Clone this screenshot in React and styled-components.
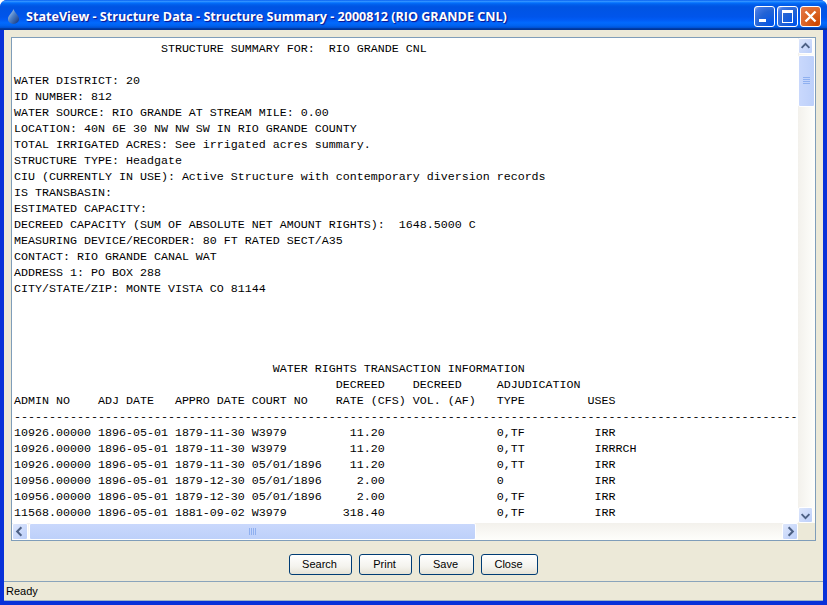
import React from "react";
import styled, { createGlobalStyle } from "styled-components";

const GlobalStyle = createGlobalStyle`
  html, body {
    margin: 0;
    padding: 0;
    background: #ffffff;
  }
`;

const row = (admin, adj, appro, court, rate, type, use) =>
  admin.padEnd(12) +
  adj.padEnd(11) +
  appro.padEnd(11) +
  court.padEnd(12) +
  rate.padStart(7) +
  "".padEnd(16) +
  type.padEnd(14) +
  use;

const report = [
  "                     STRUCTURE SUMMARY FOR:  RIO GRANDE CNL",
  "",
  "WATER DISTRICT: 20",
  "ID NUMBER: 812",
  "WATER SOURCE: RIO GRANDE AT STREAM MILE: 0.00",
  "LOCATION: 40N 6E 30 NW NW SW IN RIO GRANDE COUNTY",
  "TOTAL IRRIGATED ACRES: See irrigated acres summary.",
  "STRUCTURE TYPE: Headgate",
  "CIU (CURRENTLY IN USE): Active Structure with contemporary diversion records",
  "IS TRANSBASIN:",
  "ESTIMATED CAPACITY:",
  "DECREED CAPACITY (SUM OF ABSOLUTE NET AMOUNT RIGHTS):  1648.5000 C",
  "MEASURING DEVICE/RECORDER: 80 FT RATED SECT/A35",
  "CONTACT: RIO GRANDE CANAL WAT",
  "ADDRESS 1: PO BOX 288",
  "CITY/STATE/ZIP: MONTE VISTA CO 81144",
  "",
  "",
  "",
  "",
  "                                     WATER RIGHTS TRANSACTION INFORMATION",
  "                                              DECREED    DECREED     ADJUDICATION",
  "ADMIN NO    ADJ DATE   APPRO DATE COURT NO    RATE (CFS) VOL. (AF)   TYPE         USES",
  "-".repeat(112),
  row("10926.00000", "1896-05-01", "1879-11-30", "W3979", "11.20", "0,TF", "IRR"),
  row("10926.00000", "1896-05-01", "1879-11-30", "W3979", "11.20", "0,TT", "IRRRCH"),
  row("10926.00000", "1896-05-01", "1879-11-30", "05/01/1896", "11.20", "0,TT", "IRR"),
  row("10956.00000", "1896-05-01", "1879-12-30", "05/01/1896", "2.00", "0", "IRR"),
  row("10956.00000", "1896-05-01", "1879-12-30", "05/01/1896", "2.00", "0,TF", "IRR"),
  row("11568.00000", "1896-05-01", "1881-09-02", "W3979", "318.40", "0,TF", "IRR"),
].join("\n");

export default function App() {
  return (
    <>
      <GlobalStyle />
      <Win>
        <TitleBar>
          <Drop />
          <Title>StateView - Structure Data - Structure Summary - 2000812 (RIO GRANDE CNL)</Title>
          <Caption>
            <CapButton>
              <svg width="19" height="19" viewBox="0 0 19 19">
                <rect x="4" y="12" width="7" height="3" fill="#fff" />
              </svg>
            </CapButton>
            <CapButton>
              <svg width="19" height="19" viewBox="0 0 19 19">
                <path d="M4 3h11v13H4z M5 6v9h9V6z" fill="#fff" fillRule="evenodd" />
              </svg>
            </CapButton>
            <CapButton $close>
              <svg width="19" height="19" viewBox="0 0 19 19">
                <path d="M4.500 4.500l10 10M14.500 4.500l-10 10" stroke="#fff" strokeWidth="2.400" />
              </svg>
            </CapButton>
          </Caption>
        </TitleBar>
        <Body>
          <Panel>
            <Report>{report}</Report>
            <VScroll>
              <ScrollButton>
                <Chevron d="M3 9l4.500-4.500L12 9" />
              </ScrollButton>
              <VThumb>
                <Grip width="7" height="8" viewBox="0 0 7 8">
                  <path d="M0 .5h7M0 2.500h7M0 4.500h7M0 6.500h7" stroke="#8fb0f0" />
                </Grip>
              </VThumb>
              <Spacer />
              <ScrollButton>
                <Chevron d="M3 6l4.500 4.500L12 6" />
              </ScrollButton>
            </VScroll>
            <HScroll>
              <ScrollButton>
                <Chevron d="M9 3L4.500 7.500 9 12" />
              </ScrollButton>
              <HThumb>
                <Grip width="8" height="7" viewBox="0 0 8 7">
                  <path d="M.5 0v7M2.500 0v7M4.500 0v7M6.500 0v7" stroke="#8fb0f0" />
                </Grip>
              </HThumb>
              <Spacer />
              <ScrollButton>
                <Chevron d="M6 3l4.500 4.500L6 12" />
              </ScrollButton>
            </HScroll>
            <Corner />
          </Panel>
          <Actions>
            <ActionButton $w={63}>Search</ActionButton>
            <ActionButton $w={53}>Print</ActionButton>
            <ActionButton $w={55}>Save</ActionButton>
            <ActionButton $w={57}>Close</ActionButton>
          </Actions>
          <StatusBar>Ready</StatusBar>
        </Body>
      </Win>
    </>
  );
}

function Drop() {
  return (
    <DropIcon width="13" height="17" viewBox="0 0 14 17">
      <defs>
        <linearGradient id="dropFill" x1="0" y1="0" x2="1" y2="1">
          <stop offset="0" stopColor="#cfe0f6" />
          <stop offset="0.45" stopColor="#4f82c8" />
          <stop offset="1" stopColor="#0f2f78" />
        </linearGradient>
      </defs>
      <path d="M7 .5C6 4 1 7.500 1 11.200 1 14.300 3.800 16.500 7 16.500s6-2.200 6-5.300C13 7.500 8 4 7 .5z" fill="url(#dropFill)" />
    </DropIcon>
  );
}

function Chevron({ d }) {
  return (
    <svg width="15" height="15" viewBox="0 0 15 15">
      <path d={d} fill="none" stroke="#4d6185" strokeWidth="2.200" />
    </svg>
  );
}

const Win = styled.div`
  width: 827px;
  height: 605px;
  display: flex;
  flex-direction: column;
  box-sizing: border-box;
  overflow: hidden;
  border-radius: 7px 7px 0 0;
  background: #0831d9;
`;

const TitleBar = styled.div`
  height: 30px;
  flex: none;
  display: flex;
  align-items: center;
  padding: 2px 6px 0 7px;
  box-sizing: border-box;
  background: linear-gradient(
    180deg,
    #0058ee 0,
    #3593ff 4%,
    #288eff 6%,
    #127dff 8%,
    #036ffc 10%,
    #0262ee 14%,
    #0057e5 20%,
    #0054e3 24%,
    #0055eb 56%,
    #005bf5 66%,
    #026afe 76%,
    #0062ef 86%,
    #0052d6 92%,
    #0040ab 94%,
    #003092 100%
  );
`;

const DropIcon = styled.svg`
  flex: none;
  margin-right: 6px;
`;

const Title = styled.div`
  flex: 1;
  font-family: "Open Sans", sans-serif;
  font-weight: 700;
  font-size: 12.600px;
  color: #ffffff;
  text-shadow: 1px 1px 1px #0f1089;
  white-space: nowrap;
`;

const Caption = styled.div`
  display: flex;
  gap: 2px;
`;

const CapButton = styled.div`
  width: 21px;
  height: 21px;
  border: 1px solid #ffffff;
  border-radius: 3px;
  box-sizing: border-box;
  display: flex;
  align-items: center;
  justify-content: center;
  background: ${(p) =>
    p.$close
      ? "radial-gradient(circle at 85% 90%, #cc4600 0, #dc6527 55%, #e37a50 100%)"
      : "radial-gradient(circle at 90% 90%, #0054e9 0, #2263d5 55%, #4479e4 85%, #a3bbec 100%)"};
`;

const Body = styled.div`
  flex: none;
  height: 571px;
  margin: 0 4px;
  background: #ece9d8;
  display: flex;
  flex-direction: column;
  padding-top: 7px;
  box-sizing: border-box;
`;

const Panel = styled.div`
  flex: none;
  height: 504px;
  margin: 0 7px;
  border: 1px solid #7f9db9;
  box-sizing: border-box;
  background: #ffffff;
  display: grid;
  grid-template-columns: 786px 17px;
  grid-template-rows: 485px 17px;
`;

const Report = styled.pre`
  margin: 0;
  padding: 3px 0 0 2px;
  overflow: hidden;
  font-family: "Liberation Mono", "Courier New", monospace;
  font-size: 11.67px;
  line-height: 16px;
  color: #000000;
`;

const VScroll = styled.div`
  display: flex;
  flex-direction: column;
  gap: 1px;
  background: linear-gradient(90deg, #f3f1ec, #fefefb);
`;

const HScroll = styled.div`
  display: flex;
  gap: 1px;
  background: linear-gradient(180deg, #f3f1ec, #fefefb);
`;

const ScrollButton = styled.div`
  width: 15px;
  height: 16px;
  flex: none;
  display: flex;
  align-items: center;
  justify-content: center;
  border: 1px solid #ffffff;
  border-radius: 2px;
  box-sizing: border-box;
  background: linear-gradient(135deg, #dde6fb, #bccffa);
  ${HScroll} & {
    width: 16px;
    height: 17px;
  }
`;

const VThumb = styled.div`
  flex: none;
  height: 52px;
  display: flex;
  align-items: center;
  justify-content: center;
  box-sizing: border-box;
  border: 1px solid #ffffff;
  border-radius: 2px;
  background: linear-gradient(90deg, #c9d8fc, #bdd0fa);
`;

const HThumb = styled.div`
  flex: none;
  width: 447px;
  display: flex;
  align-items: center;
  justify-content: center;
  box-sizing: border-box;
  border: 1px solid #ffffff;
  border-radius: 2px;
  background: linear-gradient(180deg, #c9d8fc, #bdd0fa);
`;

const Grip = styled.svg`
  display: block;
`;

const Spacer = styled.div`
  flex: 1;
`;

const Corner = styled.div`
  background: #ece9d8;
`;

const Actions = styled.div`
  flex: none;
  height: 40px;
  display: flex;
  gap: 7px;
  align-items: flex-start;
  justify-content: center;
  padding-top: 13px;
  box-sizing: border-box;
  margin-left: -1px;
`;

const ActionButton = styled.button`
  width: ${(p) => p.$w}px;
  height: 21px;
  padding: 0 1px 2px 0;
  box-sizing: border-box;
  border: 1px solid #003c74;
  border-radius: 3px;
  background: linear-gradient(180deg, #ffffff 0, #f4f3ee 60%, #e6e3d6 100%);
  font-family: "Liberation Sans", Arial, sans-serif;
  font-size: 11px;
  color: #000000;
`;

const StatusBar = styled.div`
  flex: none;
  height: 20px;
  border-top: 1px solid #8aa4bb;
  border-bottom: 1px solid #9db3c4;
  box-sizing: border-box;
  padding-left: 2px;
  display: flex;
  align-items: center;
  font-family: "Liberation Sans", Arial, sans-serif;
  font-size: 11px;
  color: #000000;
`;
